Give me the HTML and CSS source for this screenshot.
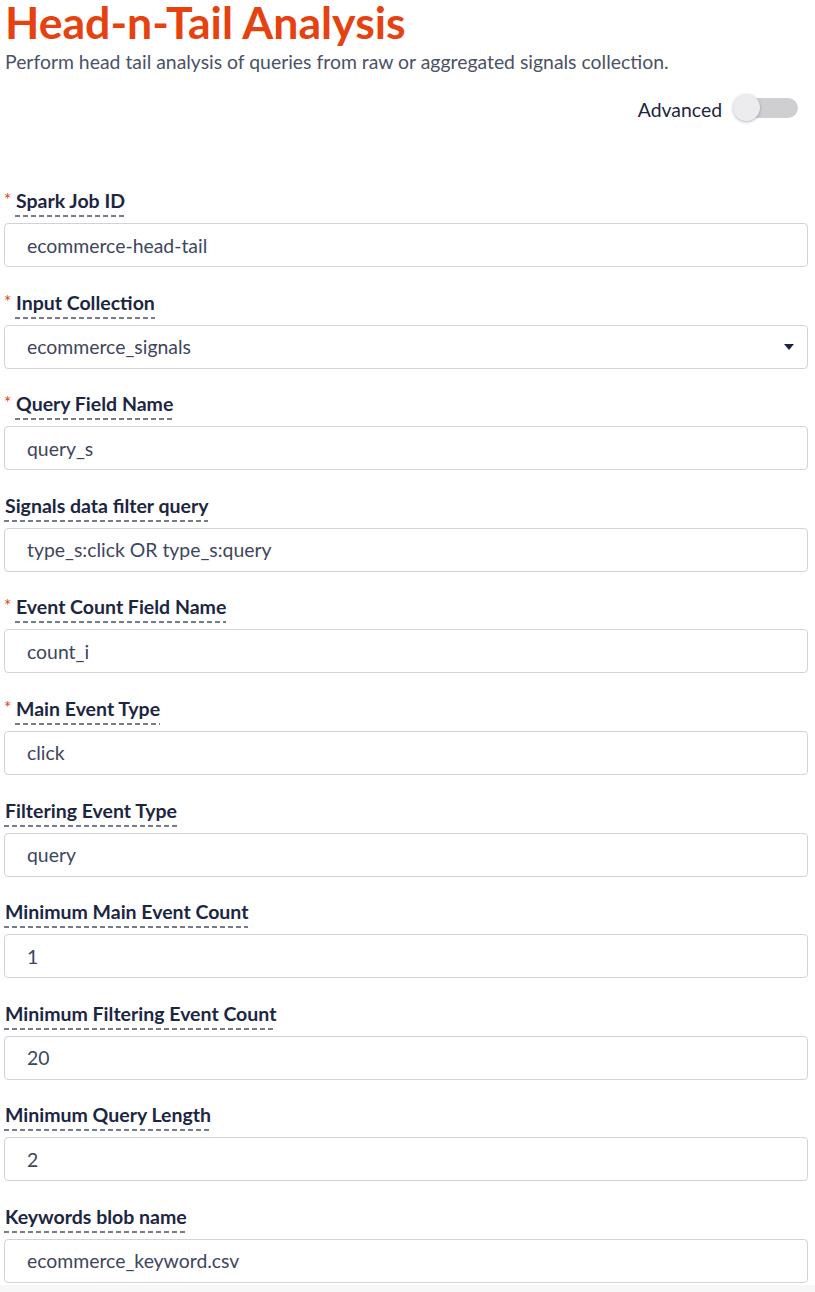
FILE: index.html
```html
<!DOCTYPE html>
<html lang="en">
<head>
  <meta charset="UTF-8" />
  <meta name="viewport" content="width=device-width, initial-scale=1.0"/>
  <title>Head-n-Tail Analysis</title>
  <link rel="stylesheet" href="styles.css">
</head>
<body>
  <div class="page">
    <h1>Head-n-Tail Analysis</h1>
    <p class="subtitle">Perform head tail analysis of queries from raw or aggregated signals collection.</p>

    <div class="advanced">
      <span>Advanced</span>
      <label class="toggle">
        <input type="checkbox">
        <span class="track"></span>
        <span class="knob"></span>
      </label>
    </div>

    <form class="job-form">
      <div class="field">
        <div class="label"><span class="req">*</span><span class="label-text">Spark Job ID</span></div>
        <input class="text-input" type="text" value="ecommerce-head-tail">
      </div>

      <div class="field">
        <div class="label"><span class="req">*</span><span class="label-text">Input Collection</span></div>
        <div class="select">
          <span>ecommerce_signals</span>
          <span class="caret"></span>
        </div>
      </div>

      <div class="field">
        <div class="label"><span class="req">*</span><span class="label-text">Query Field Name</span></div>
        <input class="text-input" type="text" value="query_s">
      </div>

      <div class="field">
        <div class="label"><span class="label-text">Signals data filter query</span></div>
        <input class="text-input" type="text" value="type_s:click OR type_s:query">
      </div>

      <div class="field">
        <div class="label"><span class="req">*</span><span class="label-text">Event Count Field Name</span></div>
        <input class="text-input" type="text" value="count_i">
      </div>

      <div class="field">
        <div class="label"><span class="req">*</span><span class="label-text">Main Event Type</span></div>
        <input class="text-input" type="text" value="click">
      </div>

      <div class="field">
        <div class="label"><span class="label-text">Filtering Event Type</span></div>
        <input class="text-input" type="text" value="query">
      </div>

      <div class="field">
        <div class="label"><span class="label-text">Minimum Main Event Count</span></div>
        <input class="text-input" type="text" value="1">
      </div>

      <div class="field">
        <div class="label"><span class="label-text">Minimum Filtering Event Count</span></div>
        <input class="text-input" type="text" value="20">
      </div>

      <div class="field">
        <div class="label"><span class="label-text">Minimum Query Length</span></div>
        <input class="text-input" type="text" value="2">
      </div>

      <div class="field last">
        <div class="label"><span class="label-text">Keywords blob name</span></div>
        <input class="text-input" type="text" value="ecommerce_keyword.csv">
      </div>
    </form>
  </div>
  <div class="bottom-band"></div>
</body>
</html>
```

FILE: styles.css
```css
body {
  margin: 0;
  background: #fff;
  font-family: Lato, "Open Sans", sans-serif;
  color: #1c2642;
}

.page {
  padding: 0 7px 0 4px;
}

h1 {
  margin: 0;
  padding-left: 1px;
  font-size: 44.6px;
  line-height: 43px;
  font-weight: 700;
  color: #e5420f;
}

.subtitle {
  margin: 7px 0 0 1px;
  font-size: 19.4px;
  line-height: 24px;
  color: #4b5266;
}

.advanced {
  display: flex;
  justify-content: flex-end;
  align-items: center;
  gap: 11px;
  margin-top: 20px;
  padding-right: 10px;
  font-size: 19.4px;
  line-height: 22px;
  color: #1c2642;
}

.advanced > span {
  padding-top: 5px;
}

.toggle {
  position: relative;
  display: block;
  width: 65px;
  height: 27px;
  cursor: pointer;
}

.toggle input {
  display: none;
}

.toggle .track {
  position: absolute;
  top: 4px;
  left: 7px;
  right: 0;
  height: 20px;
  border-radius: 10px;
  background: #cfcfd2;
}

.toggle .knob {
  position: absolute;
  top: 0;
  left: 0;
  width: 27px;
  height: 27px;
  border-radius: 50%;
  background: #ececef;
  box-shadow: 0 1px 3px rgba(40, 45, 70, 0.35);
}

.job-form {
  margin-top: 68px;
}

.field {
  margin-bottom: 23.6px;
}

.field.last {
  margin-bottom: 2px;
}

.label {
  display: flex;
  align-items: flex-start;
  font-size: 19.5px;
  line-height: 24px;
  font-weight: 700;
  color: #1c2642;
}

.req {
  width: 11px;
  padding-top: 2px;
  font-size: 17px;
  line-height: 17px;
  font-weight: 400;
  color: #e5420f;
}

.label-text {
  padding-left: 1px;
  padding-bottom: 4px;
  background-image: linear-gradient(to right, #777c8b 62%, transparent 0);
  background-size: 8px 2px;
  background-repeat: repeat-x;
  background-position: left bottom;
}

.text-input,
.select {
  display: block;
  box-sizing: border-box;
  width: 100%;
  height: 44px;
  margin-top: 6px;
  padding: 0 22px;
  border: 1.5px solid #d3d3d6;
  border-radius: 4px;
  background: #fff;
  font-family: Lato, "Open Sans", sans-serif;
  font-size: 19.4px;
  color: #3d4560;
  outline: none;
}

.select {
  display: flex;
  align-items: center;
  justify-content: space-between;
  padding-right: 8px;
}

.caret {
  width: 0;
  height: 0;
  border-left: 5px solid transparent;
  border-right: 5px solid transparent;
  border-top: 6px solid #1c2642;
  margin-right: 5px;
}

.bottom-band {
  height: 20px;
  background: #f7f7f8;
}
```
